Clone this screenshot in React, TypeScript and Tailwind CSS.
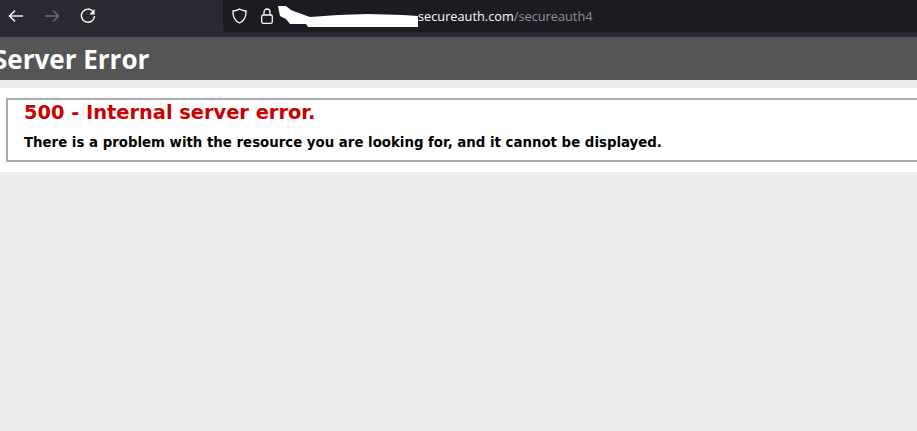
function IconBack({ className }: { className: string }) {
  return (
    <svg width="16" height="16" viewBox="0 0 16 16" fill="none" stroke="currentColor" strokeWidth="1.4" className={className}>
      <path d="M15 8H1.5" />
      <path d="M7 2.5 1.5 8 7 13.5" />
    </svg>
  );
}

function IconForward({ className }: { className: string }) {
  return (
    <svg width="16" height="16" viewBox="0 0 16 16" fill="none" stroke="currentColor" strokeWidth="1.4" className={className}>
      <path d="M1 8h13.5" />
      <path d="M9 2.5 14.5 8 9 13.5" />
    </svg>
  );
}

function IconReload({ className }: { className: string }) {
  return (
    <svg width="16" height="16" viewBox="0 0 16 16" fill="none" stroke="currentColor" strokeWidth="1.4" className={className}>
      <path d="M13.2 3.6A6.6 6.6 0 1 0 14.6 8" />
      <path d="M14.6 1v5.4H9.4z" fill="currentColor" stroke="none" />
    </svg>
  );
}

function AddressBar() {
  return (
    <div className="flex h-8 flex-1 items-center rounded-bl-[4px] bg-[#1c1b22] pl-[9px]">
      <svg width="15" height="16" viewBox="0 0 15 16" fill="none" stroke="#fbfbfe" strokeWidth="1.3">
        <path d="M7.5 1C9.5 2.2 11.5 2.8 14 3c.3 6-2 10-6.500 12C3 13 .7 9 1 3c2.500-.2 4.500-.8 6.500-2Z" />
      </svg>
      <svg width="12" height="16" viewBox="0 0 12 16" fill="none" stroke="#fbfbfe" strokeWidth="1.3" className="ml-[14px]">
        <rect x=".7" y="7" width="10.600" height="8.300" rx="1.500" />
        <path d="M3 7V4a3 3 0 0 1 6 0v3" />
      </svg>
      <svg width="140" height="22" viewBox="0 0 140 22" className="ml-[5px] shrink-0">
        <path
          d="M0 1 L8 1 L13 5 L18 7 L32 12 L60 10 L90 9 L125 10 L140 11 L140 22 L30 22 L28 19 L12 19 L8 14 L2 11 Z"
          fill="#ffffff"
        />
      </svg>
      <span className="mt-[2px] font-['Open_Sans',sans-serif] text-[12.75px] text-[#fbfbfe]">
        secureauth.com<span className="text-[#8f8f9d]">/secureauth4</span>
      </span>
    </div>
  );
}

export default function App() {
  return (
    <div className="flex h-[431px] w-[917px] flex-col overflow-hidden bg-[#eeeeee]">
      <div className="flex h-[37px] shrink-0 items-start bg-[#2b2a33]">
        <div className="flex h-8 w-[223px] items-center pl-[8px]">
          <IconBack className="text-[#fbfbfe]" />
          <IconForward className="ml-[20px] text-[#72717a]" />
          <IconReload className="ml-[20px] text-[#fbfbfe]" />
        </div>
        <AddressBar />
      </div>
      <div className="flex h-[43px] shrink-0 items-center bg-[#555555]">
        <h1 className="mt-[2px] ml-[-7px] font-['Open_Sans',sans-serif] text-[26px] font-bold whitespace-nowrap text-white">Server Error</h1>
      </div>
      <div className="mt-2 h-[84px] shrink-0 bg-white pt-[10px] pl-[6px]">
        <div className="-mr-4 h-[64px] border-2 border-[#aaaaaa] pl-[16px]">
          <h2 className="mt-[1px] font-['DejaVu_Sans',Verdana,sans-serif] text-[19.400px] leading-[24px] font-bold text-[#cc0000]">
            500 - Internal server error.
          </h2>
          <h3 className="mt-[9px] font-['DejaVu_Sans',Verdana,sans-serif] text-[13.330px] leading-[18px] font-bold text-black">
            There is a problem with the resource you are looking for, and it cannot be displayed.
          </h3>
        </div>
      </div>
    </div>
  );
}
